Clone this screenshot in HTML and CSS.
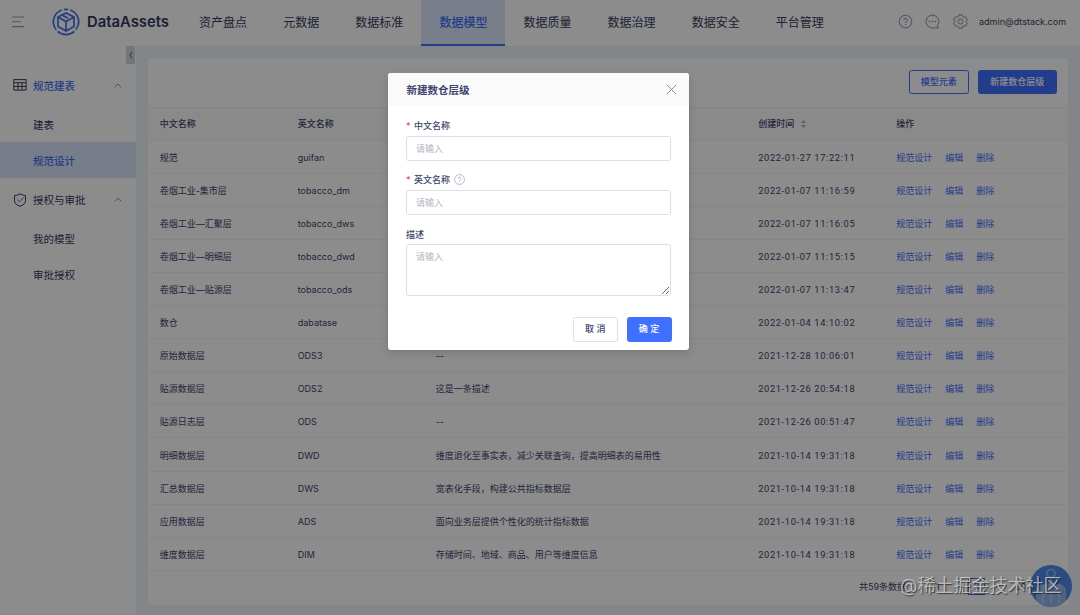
FILE: index.html
```html
<!DOCTYPE html>
<html lang="zh-CN">
<head>
<meta charset="utf-8">
<title>DataAssets</title>
<link rel="stylesheet" href="styles.css">
</head>
<body>
<div class="app">
  <header class="topbar">
    <svg class="burger" width="13" height="12" viewBox="0 0 13 12"><path d="M0 1h12M0 6h9M0 11h12" transform="scale(1 .96)"/></svg>
    <div class="brand">
      <svg class="logo" width="28" height="28" viewBox="0 0 28 28">
        <path d="M9.800 2A12.500 12.500 0 0 0 4.200 21.800M5.600 23.300A12.500 12.500 0 0 0 22.400 23.300M23.800 21.800A12.500 12.500 0 0 0 18.200 2M11.800 1.500q2.200-.4 4.400 0"/>
        <path d="M14 5l8 4.100v9.400L14 23l-8-4.500V9.100zM6 9.100l8 4.500 8-4.500M14 13.600V23M10 7.100l6 3.200"/>
      </svg>
      <span>DataAssets</span>
    </div>
    <nav class="nav">
      <a>资产盘点</a><a>元数据</a><a>数据标准</a><a class="active">数据模型</a><a>数据质量</a><a>数据治理</a><a>数据安全</a><a>平台管理</a>
    </nav>
    <div class="tools">
      <svg width="15" height="15" viewBox="0 0 15 15"><circle cx="7.500" cy="7.500" r="6.300"/><path d="M5.700 6.100a1.800 1.800 0 1 1 2.700 1.500c-.6.4-.9.700-.9 1.300M7.500 10v1"/></svg>
      <svg width="15" height="15" viewBox="0 0 15 15"><path d="M13.800 13.900H7.300A6.400 6.400 0 1 1 13.800 7.500c0 1.800-.6 3.100-1.600 4.300z"/><path class="dots" d="M4.500 7.500h.1M7.400 7.500h.1M10.300 7.500h.1"/></svg>
      <svg width="15" height="15" viewBox="0 0 15 15"><path d="M5.800.9h3.400l.6 1.800 1 .6 1.900-.4 1.700 2.900-1.300 1.700 1.300 1.700-1.700 2.900-1.900-.4-1 .6-.6 1.800H5.800l-.6-1.800-1-.6-1.900.4L.6 9.200l1.300-1.700L.6 5.800l1.700-2.900 1.900.4 1-.6z"/><circle cx="7.500" cy="7.500" r="2.500"/></svg>
      <span class="user">admin@dtstack.com</span>
    </div>
  </header>
  <div class="body">
    <aside class="side">
      <div class="group on">
        <svg width="14" height="12" viewBox="0 0 14 12"><path d="M.8.600h12.300v10.500H.8zM.8 3.700h12.300M.8 7.400h12.300M5 3.700v7.400M9 3.700v7.400"/></svg>
        <span>规范建表</span><svg class="caret" width="8" height="5" viewBox="0 0 8 5"><path d="M.7 4.300L4 1l3.300 3.300"/></svg>
      </div>
      <a>建表</a>
      <a class="on">规范设计</a>
      <div class="group">
        <svg width="14" height="14" viewBox="0 0 14 14"><path d="M1.500 2.600Q4.500 2.300 7 .8q2.500 1.500 5.500 1.800v4.800c0 2.900-2.200 5-5.500 5.800-3.300-.8-5.500-2.900-5.500-5.800z"/><path class="tick" d="M4.200 6.600l2.300 2.200 4-4.200"/></svg>
        <span>授权与审批</span><svg class="caret" width="8" height="5" viewBox="0 0 8 5"><path d="M.7 4.300L4 1l3.300 3.300"/></svg>
      </div>
      <a>我的模型</a>
      <a>审批授权</a>
      <div class="fold"><svg width="4" height="8" viewBox="0 0 4 8"><path d="M3 .5L1 4l2 3.500"/></svg></div>
    </aside>
    <main class="panel">
      <div class="actions"><button class="btn ghost">模型元素</button><button class="btn primary">新建数仓层级</button></div>
      <div class="table">
        <div class="row head"><span>中文名称</span><span>英文名称</span><span>描述</span><span>创建时间<svg class="sort" width="5" height="8" viewBox="0 0 5 8"><path d="M0 3L2.500 0 5 3zM0 5l2.500 3L5 5z"/></svg></span><span>操作</span></div>
        <div class="row"><span>规范</span><span>guifan</span><span>--</span><time>2022-01-27 17:22:11</time><span class="ops"><a>规范设计</a><a>编辑</a><a>删除</a></span></div>
        <div class="row"><span>卷烟工业-集市层</span><span>tobacco_dm</span><span>--</span><time>2022-01-07 11:16:59</time><span class="ops"><a>规范设计</a><a>编辑</a><a>删除</a></span></div>
        <div class="row"><span>卷烟工业—汇聚层</span><span>tobacco_dws</span><span>--</span><time>2022-01-07 11:16:05</time><span class="ops"><a>规范设计</a><a>编辑</a><a>删除</a></span></div>
        <div class="row"><span>卷烟工业—明细层</span><span>tobacco_dwd</span><span>--</span><time>2022-01-07 11:15:15</time><span class="ops"><a>规范设计</a><a>编辑</a><a>删除</a></span></div>
        <div class="row"><span>卷烟工业—贴源层</span><span>tobacco_ods</span><span>--</span><time>2022-01-07 11:13:47</time><span class="ops"><a>规范设计</a><a>编辑</a><a>删除</a></span></div>
        <div class="row"><span>数仓</span><span>dabatase</span><span>--</span><time>2022-01-04 14:10:02</time><span class="ops"><a>规范设计</a><a>编辑</a><a>删除</a></span></div>
        <div class="row"><span>原始数据层</span><span>ODS3</span><span>--</span><time>2021-12-28 10:06:01</time><span class="ops"><a>规范设计</a><a>编辑</a><a>删除</a></span></div>
        <div class="row"><span>贴源数据层</span><span>ODS2</span><span>这是一条描述</span><time>2021-12-26 20:54:18</time><span class="ops"><a>规范设计</a><a>编辑</a><a>删除</a></span></div>
        <div class="row"><span>贴源日志层</span><span>ODS</span><span>--</span><time>2021-12-26 00:51:47</time><span class="ops"><a>规范设计</a><a>编辑</a><a>删除</a></span></div>
        <div class="row"><span>明细数据层</span><span>DWD</span><span>维度退化至事实表，减少关联查询，提高明细表的易用性</span><time>2021-10-14 19:31:18</time><span class="ops"><a>规范设计</a><a>编辑</a><a>删除</a></span></div>
        <div class="row"><span>汇总数据层</span><span>DWS</span><span>宽表化手段，构建公共指标数据层</span><time>2021-10-14 19:31:18</time><span class="ops"><a>规范设计</a><a>编辑</a><a>删除</a></span></div>
        <div class="row"><span>应用数据层</span><span>ADS</span><span>面向业务层提供个性化的统计指标数据</span><time>2021-10-14 19:31:18</time><span class="ops"><a>规范设计</a><a>编辑</a><a>删除</a></span></div>
        <div class="row"><span>维度数据层</span><span>DIM</span><span>存储时间、地域、商品、用户等维度信息</span><time>2021-10-14 19:31:18</time><span class="ops"><a>规范设计</a><a>编辑</a><a>删除</a></span></div>
      </div>
      <div class="pager"><span class="total">共59条数据</span><span class="page">1</span><span class="cur">3</span><span class="size">20</span></div>
    </main>
  </div>
  <svg class="helper" width="42" height="42" viewBox="0 0 42 42">
    <circle class="ball" cx="21" cy="21" r="21"/>
    <path class="figure" d="M6 36V24q4-6 9-5 6-3 12 0 5-1 9 5v12q-7 6-15 6T6 36z"/>
    <circle class="ring" cx="21" cy="8.500" r="4"/><path class="ring" d="M21 13v25M13 20v18M29 20v18"/>
  </svg>
</div>
<div class="mask">
  <section class="modal">
    <div class="modal-head"><h2>新建数仓层级</h2><svg width="11" height="11" viewBox="0 0 11 11"><path d="M.8.8l9.400 9.400M10.200.8L.8 10.200"/></svg></div>
    <div class="form">
      <label><i>*</i>中文名称</label>
      <input placeholder="请输入">
      <label><i>*</i>英文名称<svg width="11" height="11" viewBox="0 0 11 11"><circle cx="5.500" cy="5.500" r="4.900"/><path d="M4.100 4.500a1.400 1.400 0 1 1 2.100 1.200c-.5.300-.7.500-.7 1M5.500 7.500v.7"/></svg></label>
      <input placeholder="请输入">
      <label>描述</label>
      <textarea placeholder="请输入"></textarea>
    </div>
    <div class="modal-foot"><button class="btn plain">取 消</button><button class="btn confirm">确 定</button></div>
  </section>
</div>
<div class="watermark">@稀土掘金技术社区</div>
</body>
</html>
```
FILE: styles.css
```css
* { box-sizing: border-box; }
body {
  margin: 0;
  width: 1080px;
  height: 615px;
  overflow: hidden;
  font-family: Inter, "Noto Sans CJK SC", sans-serif;
  font-size: 9px;
  color: #3d446e;
}
svg { fill: none; stroke: currentColor; flex: none; }
button, input, textarea { font: inherit; margin: 0; }

.app { position: relative; width: 1080px; height: 615px; display: flex; flex-direction: column; background: #eff4f8; }

.topbar { height: 46px; flex: none; display: flex; align-items: center; background: #fff; padding: 0 14px 0 12px; }
.burger { color: #999cab; stroke-width: 1.2; margin-bottom: 2px; }
.brand { display: flex; align-items: center; width: 156px; padding-left: 27px; margin-bottom: 3px; gap: 7px; font-size: 14.800px; font-weight: 600; color: #353b60; }
.logo { color: #3f70eb; stroke-width: 1.7; stroke-linejoin: round; }
.nav { display: flex; height: 46px; }
.nav a { padding: 0 18.050px 1px; display: flex; align-items: center; font-size: 12px; color: #353b60; border-bottom: 2px solid transparent; }
.nav .active { background: #dbe6fb; color: #3f70f5; font-weight: 500; border-color: #3f70ff; }
.tools { margin-left: auto; display: flex; align-items: center; gap: 12.500px; color: #7f849c; margin-bottom: 3px; }
.tools svg { stroke-width: .9; }
.tools .dots { stroke-width: 1.600; stroke-linecap: round; }
.user { color: #3d4360; font-size: 9px; width: 87px; margin-left: -1px; white-space: nowrap; }

.body { flex: 1; display: flex; min-height: 0; }
.side { position: relative; width: 136px; background: #fff; padding-top: 17.800px; font-size: 10.500px; color: #353b60; }
.side a { display: flex; align-items: center; height: 36px; padding-left: 33px; }
.side a.on { background: #dae5f9; color: #3f70f5; font-weight: 500; }
.group { display: flex; align-items: center; height: 42.500px; padding: 0 14px 0 12.500px; }
.group span { margin-left: 6.500px; }
.group.on span { color: #3f70f5; font-weight: 500; }
.group .tick { stroke: #3f70f5; }
.caret { margin-left: auto; color: #8e92a6; }
.fold { position: absolute; left: 126px; top: 0; width: 9px; height: 18px; background: #d4d7dd; display: flex; align-items: center; justify-content: center; color: #5d6278; }

.panel { width: 920px; margin: 12px 0 10px 12px; background: #fff; border-radius: 3px; display: flex; flex-direction: column; }
.actions { display: flex; justify-content: flex-end; gap: 9px; height: 48.500px; padding: 11.500px 11.500px 0 0; }
.btn { height: 24.500px; padding: 0; border-radius: 2.500px; border: 1px solid #3f70ff; font-size: 9px; line-height: 22px; font-weight: 500; }
.ghost { width: 60.500px; background: #fff; color: #3f70ff; }
.primary { width: 78.500px; background: #3f70ff; color: #fff; }
.row { display: grid; grid-template-columns: 138px 138px 322.500px 138px 1fr; align-items: center; height: 33.120px; padding: 1px 0 0 11.700px; border-bottom: 1px solid #f4f5f7; letter-spacing: .02px; white-space: nowrap; }
.row > span:first-child, .row > span:nth-child(3), .row.head, .ops { letter-spacing: 0; }
.row.head { height: 34px; background: #fbfcfd; border-top: 1px solid #eceef2; font-weight: 500; padding-top: 0; }
.sort { margin-left: 7px; vertical-align: -1px; fill: #aeb2c3; stroke: none; }
.row time { font-family: Roboto, sans-serif; font-size: 9.300px; letter-spacing: .630px; }
.ops { display: flex; gap: 13px; color: #3f70ff; }
.pager { display: flex; align-items: center; padding-left: 711px; height: 32px; }
.total { width: 77px; }
.page { width: 32px; }
.cur { border: 1px solid #3f70ff; color: #3f70ff; width: 17px; height: 17px; text-align: center; line-height: 15px; }
.size { margin-left: 30px; }
.helper { position: absolute; left: 1030px; top: 564.500px; }
.ball { fill: #4d8aee; stroke: none; }
.figure { fill: #c3d0e8; stroke: none; opacity: .6; }
.ring { stroke: #c9dcff; stroke-width: 2; opacity: .5; }

.mask { position: absolute; inset: 0 auto auto 0; width: 1080px; height: 615px; background: rgba(0,0,0,.45); padding: 73px 0 0 388.400px; }
.modal { width: 301px; height: 277.400px; background: #fff; border-radius: 3px; overflow: hidden; box-shadow: 0 3px 9px rgba(0,0,0,.15); }
.modal-head { height: 33px; display: flex; justify-content: space-between; align-items: center; background: #fafafa; padding: 0 12.800px 1px 18px; color: #8f8f94; }
.modal-head h2 { margin: 0; font-size: 10.500px; font-weight: 600; color: #3d446e; }
.form { padding: 10.500px 17.700px 0; display: flex; flex-direction: column; }
.form label { display: flex; align-items: center; height: 19.500px; padding-bottom: 1.200px; font-weight: 500; }
.form i { color: #f5454f; font-style: normal; width: 8px; }
.form label svg { margin-left: 4px; color: #a4a7b5; stroke-width: .8; }
.form input, .form textarea { width: 265.300px; border: 1px solid #dddfe6; border-radius: 2.500px; padding: 0 9px; outline: 0; display: block; }
.form input { height: 24.500px; margin: 0 0 10.200px; }
.form textarea { height: 52px; padding-top: 4.500px; resize: vertical; }
::placeholder { color: #b4b6c2; opacity: 1; }
.modal-foot { display: flex; justify-content: flex-end; gap: 9px; padding: 20.700px 17.900px 0; }
.plain { width: 44.500px; background: #fff; border-color: #dddfe6; color: #3d446e; }
.confirm { width: 45px; background: #3f70ff; color: #fff; }

.watermark { position: absolute; left: 900px; top: 573px; font-size: 18px; line-height: 26px; white-space: nowrap; color: rgba(215,215,215,.75); text-shadow: 1px 1px 1px rgba(0,0,0,.6); }
```
